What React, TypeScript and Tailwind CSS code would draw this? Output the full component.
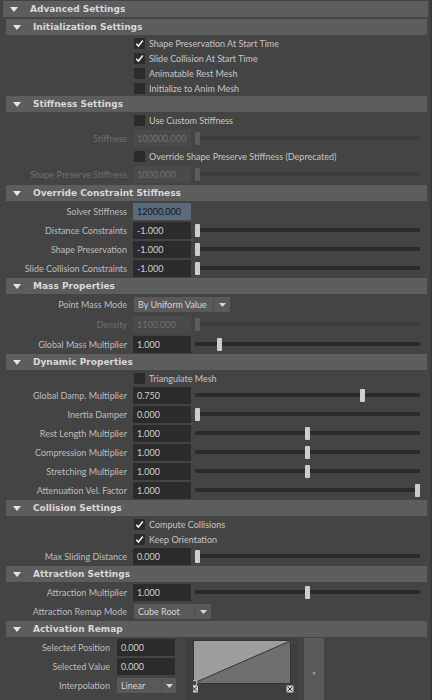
import React from 'react';

// Attribute rows for each collapsible section
type Row =
  | { kind: 'check'; label: string; checked?: boolean }
  | { kind: 'field'; label: string; value: string; slider?: number; disabled?: boolean; active?: boolean }
  | { kind: 'menu'; label: string; value: string; width: string };

const SECTIONS: { title: string; rows: Row[] }[] = [
  {
    title: 'Initialization Settings',
    rows: [
      { kind: 'check', label: 'Shape Preservation At Start Time', checked: true },
      { kind: 'check', label: 'Slide Collision At Start Time', checked: true },
      { kind: 'check', label: 'Animatable Rest Mesh' },
      { kind: 'check', label: 'Initialize to Anim Mesh' },
    ],
  },
  {
    title: 'Stiffness Settings',
    rows: [
      { kind: 'check', label: 'Use Custom Stiffness' },
      { kind: 'field', label: 'Stiffness', value: '100000.000', slider: 0, disabled: true },
      { kind: 'check', label: 'Override Shape Preserve Stiffness (Deprecated)' },
      { kind: 'field', label: 'Shape Preserve Stiffness', value: '1000.000', slider: 0, disabled: true },
    ],
  },
  {
    title: 'Override Constraint Stiffness',
    rows: [
      { kind: 'field', label: 'Solver Stiffness', value: '12000.000', active: true },
      { kind: 'field', label: 'Distance Constraints', value: '-1.000', slider: 0 },
      { kind: 'field', label: 'Shape Preservation', value: '-1.000', slider: 0 },
      { kind: 'field', label: 'Slide Collision Constraints', value: '-1.000', slider: 0 },
    ],
  },
  {
    title: 'Mass Properties',
    rows: [
      { kind: 'menu', label: 'Point Mass Mode', value: 'By Uniform Value', width: 'w-[96px]' },
      { kind: 'field', label: 'Density', value: '1100.000', slider: 0, disabled: true },
      { kind: 'field', label: 'Global Mass Multiplier', value: '1.000', slider: 0.1 },
    ],
  },
  {
    title: 'Dynamic Properties',
    rows: [
      { kind: 'check', label: 'Triangulate Mesh' },
      { kind: 'field', label: 'Global Damp. Multiplier', value: '0.750', slider: 0.75 },
      { kind: 'field', label: 'Inertia Damper', value: '0.000', slider: 0 },
      { kind: 'field', label: 'Rest Length Multiplier', value: '1.000', slider: 0.5 },
      { kind: 'field', label: 'Compression Multiplier', value: '1.000', slider: 0.5 },
      { kind: 'field', label: 'Stretching Multiplier', value: '1.000', slider: 0.5 },
      { kind: 'field', label: 'Attenuation Vel. Factor', value: '1.000', slider: 1 },
    ],
  },
  {
    title: 'Collision Settings',
    rows: [
      { kind: 'check', label: 'Compute Collisions', checked: true },
      { kind: 'check', label: 'Keep Orientation', checked: true },
      { kind: 'field', label: 'Max Sliding Distance', value: '0.000', slider: 0 },
    ],
  },
  {
    title: 'Attraction Settings',
    rows: [
      { kind: 'field', label: 'Attraction Multiplier', value: '1.000', slider: 0.5 },
      { kind: 'menu', label: 'Attraction Remap Mode', value: 'Cube Root', width: 'w-[77px]' },
    ],
  },
];

function Arrow() {
  return (
    <svg width="8" height="5" viewBox="0 0 8 5" className="shrink-0">
      <path d="M0 0 H8 L4 5 Z" fill="#e6e6e6" />
    </svg>
  );
}

function Header({ title }: { title: string }) {
  return (
    <div className="h-[16px] flex items-center pl-[7px] gap-[12px] bg-[#5d5d5d] font-bold text-[#d8d8d8] text-[9px] [font-family:'DejaVu_Sans',sans-serif]">
      <Arrow />
      <span>{title}</span>
    </div>
  );
}

function Checkbox({ checked }: { checked?: boolean }) {
  return (
    <div className="w-[11px] h-[11px] bg-[#2b2b2b] flex items-center justify-center shrink-0">
      {checked && (
        <svg width="9" height="9" viewBox="0 0 9 9">
          <path d="M1.2 4.8 L3.4 7 L7.8 1.6" stroke="#f2f2f2" strokeWidth="1.6" fill="none" />
        </svg>
      )}
    </div>
  );
}

function Slider({ value, disabled }: { value: number; disabled?: boolean }) {
  return (
    <div className="relative flex-1 h-[13px] ml-[4px] mr-[7px]">
      <div
        className={`absolute left-0 right-0 top-[4px] h-[4px] rounded-[1px] ${
          disabled ? 'bg-[#3d3d3d]' : 'bg-[#2b2b2b]'
        }`}
      />
      <div
        className={`absolute top-0 w-[5px] h-[13px] rounded-[1px] ${
          disabled ? 'bg-[#5c5c5c]' : 'bg-[#cdcdcd]'
        }`}
        style={{ left: `calc(${value} * (100% - 5px))` }}
      />
    </div>
  );
}

function DropArrow() {
  return (
    <svg width="7" height="4" viewBox="0 0 7 4">
      <path d="M0 0 H7 L3.5 4 Z" fill="#d8d8d8" />
    </svg>
  );
}

function Menu({ value, width, arrowW }: { value: string; width: string; arrowW: string }) {
  return (
    <div className={`${width} h-[15px] flex bg-[#595959] rounded-[1px]`}>
      <div className="flex-1 flex items-center pl-[4px] text-[#d6d6d6] truncate">{value}</div>
      <div className={`${arrowW} flex items-center justify-center border-l border-[#4e4e4e]`}>
        <DropArrow />
      </div>
    </div>
  );
}

function AttrRow({ row }: { row: Row }) {
  if (row.kind === 'check') {
    return (
      <div className="h-[15px] flex items-center pl-[128px] gap-[4px] text-[#c4c4c4]">
        <Checkbox checked={row.checked} />
        <span className="whitespace-nowrap">{row.label}</span>
      </div>
    );
  }
  if (row.kind === 'menu') {
    return (
      <div className="h-[19px] flex items-center">
        <div className="w-[121px] text-right text-[#bdbdbd] whitespace-nowrap">{row.label}</div>
        <div className="ml-[7px]">
          <Menu value={row.value} width={row.width} arrowW="w-[17px]" />
        </div>
      </div>
    );
  }
  return (
    <div className={`flex items-center ${row.disabled ? 'h-[21px]' : 'h-[19px]'}`}>
      <div
        className={`w-[121px] text-right whitespace-nowrap ${
          row.disabled ? 'text-[#6f6f6f]' : 'text-[#bdbdbd]'
        }`}
      >
        {row.label}
      </div>
      <div
        className={`ml-[6px] w-[58px] h-[17px] flex items-center pl-[4px] rounded-[1px] ${
          row.disabled
            ? 'bg-[#4a4a4a] text-[#707070]'
            : row.active
            ? 'bg-[#5b6b7c] text-[#10161e]'
            : 'bg-[#2b2b2b] text-[#d0d0d0]'
        }`}
      >
        {row.value}
      </div>
      {row.slider !== undefined && <Slider value={row.slider} disabled={row.disabled} />}
    </div>
  );
}

function RemapField({ label, value }: { label: string; value: string }) {
  return (
    <div className="h-[19px] flex items-center">
      <div className="w-[104px] text-right text-[#bdbdbd] whitespace-nowrap">{label}</div>
      <div className="ml-[7px] w-[58px] h-[17px] flex items-center pl-[4px] bg-[#2b2b2b] text-[#d0d0d0] rounded-[1px]">
        {value}
      </div>
    </div>
  );
}

function RemapGraph() {
  return (
    <div className="w-[113px] h-[70px] bg-[#3f3f3f] pl-[8px] pt-[2px]">
      <svg width="104" height="56" viewBox="0 0 104 56">
        <rect x="0.5" y="0.5" width="97" height="43" fill="#6f6f6f" stroke="#333" />
        <path d="M1 43 L1 1 L97 1 Z" fill="#9d9d9d" />
        <line x1="1" y1="43" x2="97" y2="1" stroke="#333" strokeWidth="1" />
        <circle cx="97" cy="1.5" r="2" fill="none" stroke="#4a5a6e" strokeWidth="1" />
        <circle cx="1.5" cy="43" r="2.5" fill="#3f3f3f" stroke="#d0d0d0" strokeWidth="1" />
        <rect x="-2" y="45.5" width="7" height="7" fill="#cfcfcf" />
        <path d="M-1 46.5 L4 51.5 M4 46.5 L-1 51.5" stroke="#333" strokeWidth="1" />
        <rect x="93.5" y="45.5" width="7" height="7" fill="#cfcfcf" />
        <path d="M94.5 46.5 L99.5 51.5 M99.5 46.5 L94.5 51.5" stroke="#333" strokeWidth="1" />
      </svg>
    </div>
  );
}

export default function App() {
  return (
    <div className="w-[432px] h-[700px] overflow-hidden bg-[#444444] text-[9px] leading-none [font-family:Lato,'Noto_Sans',sans-serif] pt-[1px] pl-[3px] pr-[2px] border-r-2 border-[#3a3a3a]">
      <Header title="Advanced Settings" />
      <div className="ml-[3px] mr-[1px] mt-[2px] flex flex-col">
        {SECTIONS.map((s) => (
          <div key={s.title}>
            <Header title={s.title} />
            <div className="pt-[1px]">
              {s.rows.map((r) => (
                <AttrRow key={r.label} row={r} />
              ))}
            </div>
          </div>
        ))}
        <div>
          <Header title="Activation Remap" />
          <div className="pt-[1px] flex">
            <div className="flex flex-col">
              <RemapField label="Selected Position" value="0.000" />
              <RemapField label="Selected Value" value="0.000" />
              <div className="h-[19px] flex items-center">
                <div className="w-[104px] text-right text-[#bdbdbd]">Interpolation</div>
                <div className="ml-[7px]">
                  <Menu value="Linear" width="w-[59px]" arrowW="w-[15px]" />
                </div>
              </div>
            </div>
            <div className="ml-[9px]">
              <RemapGraph />
            </div>
            <div className="ml-[6px] w-[20px] h-[70px] bg-[#5a5a5a] flex items-center justify-center text-[#cfcfcf] text-[8px]">
              &gt;
            </div>
          </div>
        </div>
      </div>
    </div>
  );
}
